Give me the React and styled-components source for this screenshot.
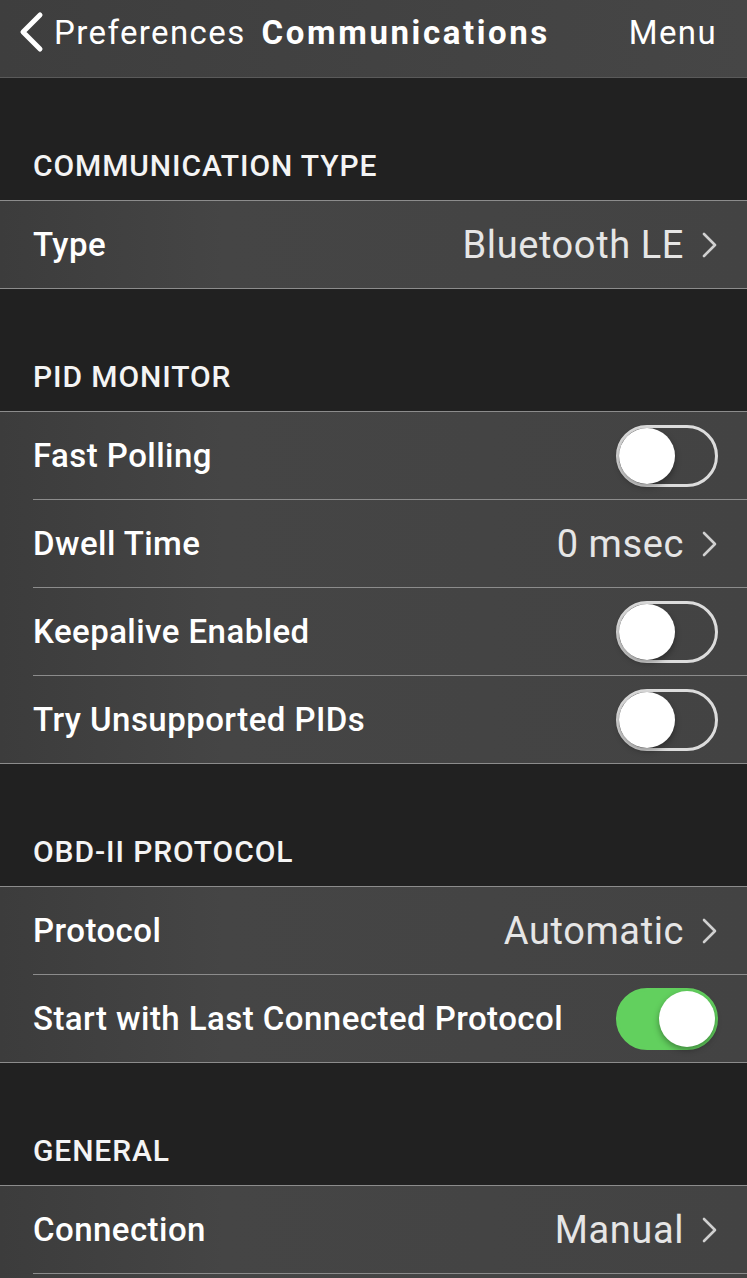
import React from 'react';
import styled, { createGlobalStyle } from 'styled-components';

const lineColor = '#8c8c8c';

const GlobalStyle = createGlobalStyle`
  html, body {
    margin: 0;
    padding: 0;
    background: #212121;
  }
  body {
    font-family: Roboto, "Liberation Sans", Arial, sans-serif;
    color: #fff;
  }
`;

const Page = styled.div`
  width: 747px;
  height: 1278px;
  background: #212121;
  overflow: hidden;
`;

const NavBar = styled.header`
  height: 78px;
  box-sizing: border-box;
  background: linear-gradient(90deg, #3e3e3e, #464646);
  border-bottom: 1px solid #5a5a5a;
  display: flex;
  align-items: center;
  padding: 0 30px 13px 17px;
  font-size: 33px;
  letter-spacing: 1.4px;
`;

const BackButton = styled.div`
  display: flex;
  align-items: center;
  gap: 9px;
  font-weight: 400;
`;

const Title = styled.div`
  font-weight: 700;
  margin-left: 16px;
  letter-spacing: 2.6px;
`;

const MenuButton = styled.div`
  margin-left: auto;
`;

const SectionHeader = styled.div`
  height: 122px;
  box-sizing: border-box;
  display: flex;
  align-items: flex-end;
  padding: 0 33px 17px;
  font-size: 30px;
  font-weight: 500;
  letter-spacing: 0.9px;
  color: #f4f4f4;
`;

const Group = styled.div`
  background: linear-gradient(90deg, #3c3c3c, #454545 30%, #434343);
  border-top: 1px solid ${lineColor};
  border-bottom: 1px solid ${lineColor};
`;

const Row = styled.div`
  position: relative;
  height: 87px;
  display: flex;
  align-items: center;
  padding: 0 29px 0 33px;
  font-size: 33px;
  font-weight: 500;
  letter-spacing: 0.45px;
  & + & {
    margin-top: 1px;
  }
  & + &::before {
    content: '';
    position: absolute;
    top: -1px;
    left: 33px;
    right: 0;
    height: 1px;
    background: ${lineColor};
  }
`;

const Label = styled.span`
  color: #fff;
`;

const Value = styled.span`
  margin-left: auto;
  color: #e6e6e6;
  font-weight: 400;
  font-size: 38px;
  letter-spacing: 0.6px;
  display: flex;
  align-items: center;
  gap: 18px;
`;

const Track = styled.div`
  margin-left: auto;
  width: 102px;
  height: 62px;
  box-sizing: border-box;
  border-radius: 31px;
  border: 3px solid ${p => (p.$on ? '#62d05e' : '#dcdcdc')};
  background: ${p => (p.$on ? '#62d05e' : 'transparent')};
  display: flex;
  align-items: center;
  justify-content: ${p => (p.$on ? 'flex-end' : 'flex-start')};
`;

const Knob = styled.div`
  width: 56px;
  height: 56px;
  border-radius: 50%;
  background: #fff;
  box-shadow: 0 3px 6px rgba(0, 0, 0, 0.35);
`;

const BackChevron = () => (
  <svg width="28" height="42" viewBox="0 0 28 42">
    <path d="M23 4 L6 21 L23 38" fill="none" stroke="#fff" strokeWidth="5" strokeLinecap="round" strokeLinejoin="round" />
  </svg>
);

const Chevron = () => (
  <svg width="16" height="26" viewBox="0 0 16 26">
    <path d="M2 2 L13 13 L2 24" fill="none" stroke="#d0d0d0" strokeWidth="2.6" strokeLinecap="round" strokeLinejoin="round" />
  </svg>
);

const Toggle = ({ on }) => (
  <Track $on={on}>
    <Knob />
  </Track>
);

const sections = [
  {
    title: 'COMMUNICATION TYPE',
    rows: [{ label: 'Type', value: 'Bluetooth LE' }],
  },
  {
    title: 'PID MONITOR',
    rows: [
      { label: 'Fast Polling', toggle: false },
      { label: 'Dwell Time', value: '0 msec' },
      { label: 'Keepalive Enabled', toggle: false },
      { label: 'Try Unsupported PIDs', toggle: false },
    ],
  },
  {
    title: 'OBD-II PROTOCOL',
    rows: [
      { label: 'Protocol', value: 'Automatic' },
      { label: 'Start with Last Connected Protocol', toggle: true },
    ],
  },
  {
    title: 'GENERAL',
    rows: [{ label: 'Connection', value: 'Manual' }, { label: '' }],
  },
];

export default function App() {
  return (
    <Page>
      <GlobalStyle />
      <NavBar>
        <BackButton>
          <BackChevron />
          Preferences
        </BackButton>
        <Title>Communications</Title>
        <MenuButton>Menu</MenuButton>
      </NavBar>
      {sections.map(section => (
        <React.Fragment key={section.title}>
          <SectionHeader>{section.title}</SectionHeader>
          <Group>
            {section.rows.map((row, i) => (
              <Row key={i}>
                <Label>{row.label}</Label>
                {row.value !== undefined && (
                  <Value>
                    {row.value}
                    <Chevron />
                  </Value>
                )}
                {row.toggle !== undefined && <Toggle on={row.toggle} />}
              </Row>
            ))}
          </Group>
        </React.Fragment>
      ))}
    </Page>
  );
}
